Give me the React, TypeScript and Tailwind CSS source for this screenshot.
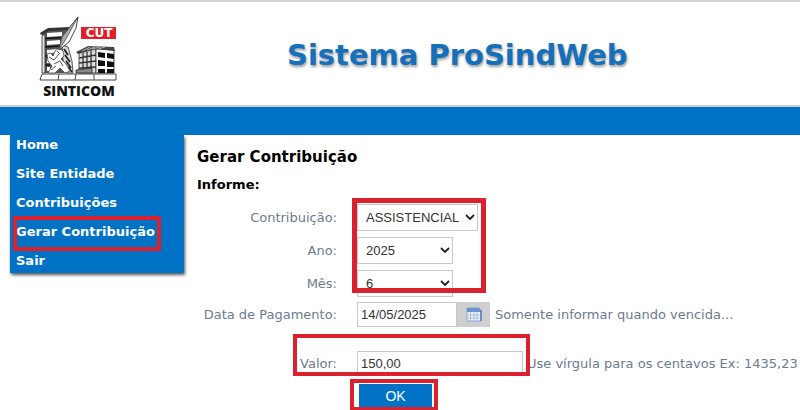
import type { ReactNode } from 'react';

const menuItems = ['Home', 'Site Entidade', 'Contribuições', 'Gerar Contribuição', 'Sair'];

const Logo = () => (
  <svg viewBox="0 0 80 84" className="h-[84px] w-20 shrink-0" role="img" aria-label="SINTICOM CUT">
    {/* Left tower */}
    <path d="M3 18 L8 14 L30 12 L27 24 L24 30 L31 38 L34 57 H3 Z" fill="#555" />
    <path d="M1 17 L9 12 L31 11 L30 14 L10 15 L2 19 Z" fill="#333" />
    <path d="M3 20 L6 18 V57 H3 Z" fill="#ddd" stroke="#333" strokeWidth="0.8" />
    <path d="M8 17 L23 16 V20 L8 21 Z M8 25 L21 24 V28 L8 29 Z M8 34 L19 33 V36 L8 38 Z M8 43 L12 42 V47 H8 Z M8 51 H11 V55 H8 Z" fill="#fff" />
    <path d="M6 22.5 L25 21.5 M6 31 L22 30 M6 40 L14 39 M6 49 H11" stroke="#111" strokeWidth="1.6" />
    <path d="M23 29 L29 31 L33 45 L34 57 H28 L24 44 Z" fill="#ddd" stroke="#333" strokeWidth="0.8" />
    <path d="M25 33 L29 39 M26 39 L31 46 M27 45 L32 52 M29 51 L33 56" stroke="#222" strokeWidth="1.8" />
    {/* Worker */}
    <path d="M8 38 L12 37 L14 40 L16 35 L20 32 L24 35 L25 40 L22 43 L27 48 L31 55 L26 57 L21 52 L16 57 H9 L13 50 L9 45 Z" fill="#fff" stroke="#444" strokeWidth="0.8" />
    <path d="M10 41 L15 44 L20 38 M15 48 L21 45 L24 50 M12 54 L17 50 M18 35 L21 38" fill="none" stroke="#555" strokeWidth="1" />
    {/* Pen nib */}
    <path d="M39 1 L37 12 L30 26 L20 34 L23 21 Z" fill="#fff" stroke="#333" strokeWidth="0.9" />
    <path d="M39 1 L23 21 L20 34 L27 23 Z" fill="#aaa" stroke="#444" strokeWidth="0.7" />
    {/* Right building */}
    <path d="M40 37 L57 33 V57 H40 Z" fill="#ddd" stroke="#333" strokeWidth="0.8" />
    <path d="M40 42 L57 39 M40 47 L57 45 M40 52 L57 51 M44 37 V56 M48 36 V56 M52 35 V56" stroke="#333" strokeWidth="1.3" />
    <path d="M57 33 L75 34 V57 H57 Z" fill="#fff" stroke="#222" strokeWidth="0.8" />
    <path d="M59 36 L66 37 V42 L59 41 Z M68 37 L75 38 V43 L68 42 Z M59 44 L66 45 V50 L59 50 Z M68 45 L75 46 V51 H68 Z M59 53 H66 V57 H59 Z M68 53 H75 V57 H68 Z" fill="#111" />
    <path d="M37 36 L49 30 L75 31 L76 35 L57 33 L39 38 Z" fill="#444" />
    <path d="M43 35 L51 31 M48 34 L56 31 M53 33 L61 31 M59 33 L66 31" stroke="#ccc" strokeWidth="0.8" />
    <path d="M37 54 L53 52 V57 H37 Z" fill="#888" stroke="#222" strokeWidth="0.8" />
    {/* Base */}
    <path d="M3 58 H77 V64 H1 Z M20 58 L19 64 M37 58 L36 64 M55 58 V64" fill="#fff" stroke="#444" strokeWidth="1" />
    <rect x="42" y="11" width="35" height="12" fill="#df2029" />
    <text x="60" y="21" textAnchor="middle" fontFamily="DejaVu Sans, sans-serif" fontWeight="700" fontSize="12" fill="#fff">CUT</text>
    <text x="40" y="80" textAnchor="middle" fontFamily="Open Sans, sans-serif" fontWeight="800" fontSize="14" fill="#111">SINTICOM</text>
  </svg>
);

const CalendarIcon = () => (
  <svg viewBox="0 0 16 16" className="size-4" aria-hidden="true">
    <path d="M1 1 H13 L15 3 V14 H1 Z" fill="#f3f7ff" stroke="#88a4d4" />
    <path d="M1 1 H13 L15 3 V5 H1 Z" fill="#6f94d2" />
    <path d="M1 8 H14 M1 11 H14 M4.5 5 V14 M8 5 V14 M11 5 V14" stroke="#a3bbe2" strokeWidth="1" />
    <path d="M15 3 V14" stroke="#5478b8" strokeWidth="1.5" />
  </svg>
);

const Row = ({ id, label, children }: { id: string; label: string; children: ReactNode }) => (
  <div className="flex items-center gap-5">
    <label htmlFor={id} className="w-[140px] shrink-0 text-right">{label}</label>
    <div className="flex items-center">{children}</div>
  </div>
);

const Select = ({ id, value, width }: { id: string; value: string; width: string }) => (
  <div className={`relative ${width}`}>
    <select
      id={id}
      defaultValue={value}
      className="block h-[27px] w-full appearance-none border border-[#c8c8c8] bg-white pl-2 font-['Liberation_Sans',sans-serif] text-[13px] text-[#333]"
    >
      <option>{value}</option>
    </select>
    <svg viewBox="0 0 10 7" className="pointer-events-none absolute top-[10px] right-[3px] h-[7px] w-2.5" aria-hidden="true">
      <path d="M1 1 L5 5 L9 1" fill="none" stroke="#222" strokeWidth="1.8" />
    </svg>
  </div>
);

// Red frame that marks the controls to fill in
const Mark = ({ className }: { className: string }) => (
  <div className={`pointer-events-none absolute border-[#da212d] ${className}`} />
);

export default function App() {
  return (
    <div className="bg-white font-['DejaVu_Sans',Verdana,sans-serif] text-[13px] text-[#6b7a90]">
      <header className="flex h-[107px] items-start border-t-2 border-b-2 border-t-[#d4d4d4] border-b-[#d0d0d0] pt-3.5 pl-[39px]">
        <Logo />
        <h1 className="mt-5 ml-[168px] text-[29px] leading-[38px] font-bold whitespace-nowrap text-[#156fba] [text-shadow:1px_2px_3px_#999]">
          Sistema ProSindWeb
        </h1>
      </header>
      <div className="h-7 bg-[#0072c6]" />

      <div className="flex items-start">
        <nav className="ml-[10px] w-[174px] shrink-0 bg-[#0072c6] text-white shadow-[1px_2px_3px_#555] [clip-path:inset(0_-6px_-6px_-6px)]">
          <ul>
            {menuItems.map((item) => (
              <li key={item} className="relative h-[29px] pl-1.5 text-[13px] leading-5 font-bold whitespace-nowrap last:h-[22px]">
                <a href="#">{item}</a>
                {item === 'Gerar Contribuição' && <Mark className="-top-1.5 left-[3px] h-[35px] w-[148px] border-4" />}
              </li>
            ))}
          </ul>
        </nav>

        <main className="ml-[13px] flex-1 pt-3 text-black">
          <h2 className="text-[15px] leading-5 font-bold">Gerar Contribuição</h2>
          <h3 className="mt-2 text-[13px] leading-5 font-bold">Informe:</h3>

          <form className="mt-[9px] whitespace-nowrap text-[#6b7a90]" onSubmit={(e) => e.preventDefault()}>
            <div className="relative flex flex-col gap-1.5">
              <Row id="contribuicao" label="Contribuição:">
                <Select id="contribuicao" value="ASSISTENCIAL" width="w-[121px]" />
              </Row>
              <Row id="ano" label="Ano:">
                <Select id="ano" value="2025" width="w-24" />
              </Row>
              <Row id="mes" label="Mês:">
                <Select id="mes" value="6" width="w-24" />
              </Row>
              <Mark className="-top-1.5 left-[155px] h-[95px] w-[134px] border-[5px]" />
            </div>

            <div className="mt-[5px]">
              <Row id="data" label="Data de Pagamento:">
                <input
                  id="data"
                  type="text"
                  defaultValue="14/05/2025"
                  className="h-[25px] w-[100px] border border-[#c8c8c8] bg-white px-[3px] font-['Liberation_Sans',sans-serif] text-[13px] text-[#333]"
                />
                <button type="button" aria-label="Calendário" className="flex h-[25px] w-[33px] items-center justify-center bg-[#cfcfcf]">
                  <CalendarIcon />
                </button>
                <span className="pl-[5px]">Somente informar quando vencida...</span>
              </Row>
            </div>

            <div className="relative mt-6">
              <Row id="valor" label="Valor:">
                <input
                  id="valor"
                  type="text"
                  defaultValue="150,00"
                  className="h-[25px] w-[166px] border border-[#c8c8c8] bg-white px-[3px] font-['Liberation_Sans',sans-serif] text-[13px] text-[#333]"
                />
                <span className="pl-1">Use vírgula para os centavos Ex: 1435,23</span>
              </Row>
              <Mark className="-top-[17px] left-24 h-[42px] w-[237px] border-4" />
            </div>

            <div className="relative mt-2 ml-[162px] w-[73px] pb-[2px]">
              <button type="submit" className="block h-6 w-full bg-[#0072c6] font-['Liberation_Sans',sans-serif] text-sm text-white">
                OK
              </button>
              <Mark className="-top-[5px] -left-[9px] h-8 w-[88px] border-4" />
            </div>
          </form>
        </main>
      </div>
    </div>
  );
}
